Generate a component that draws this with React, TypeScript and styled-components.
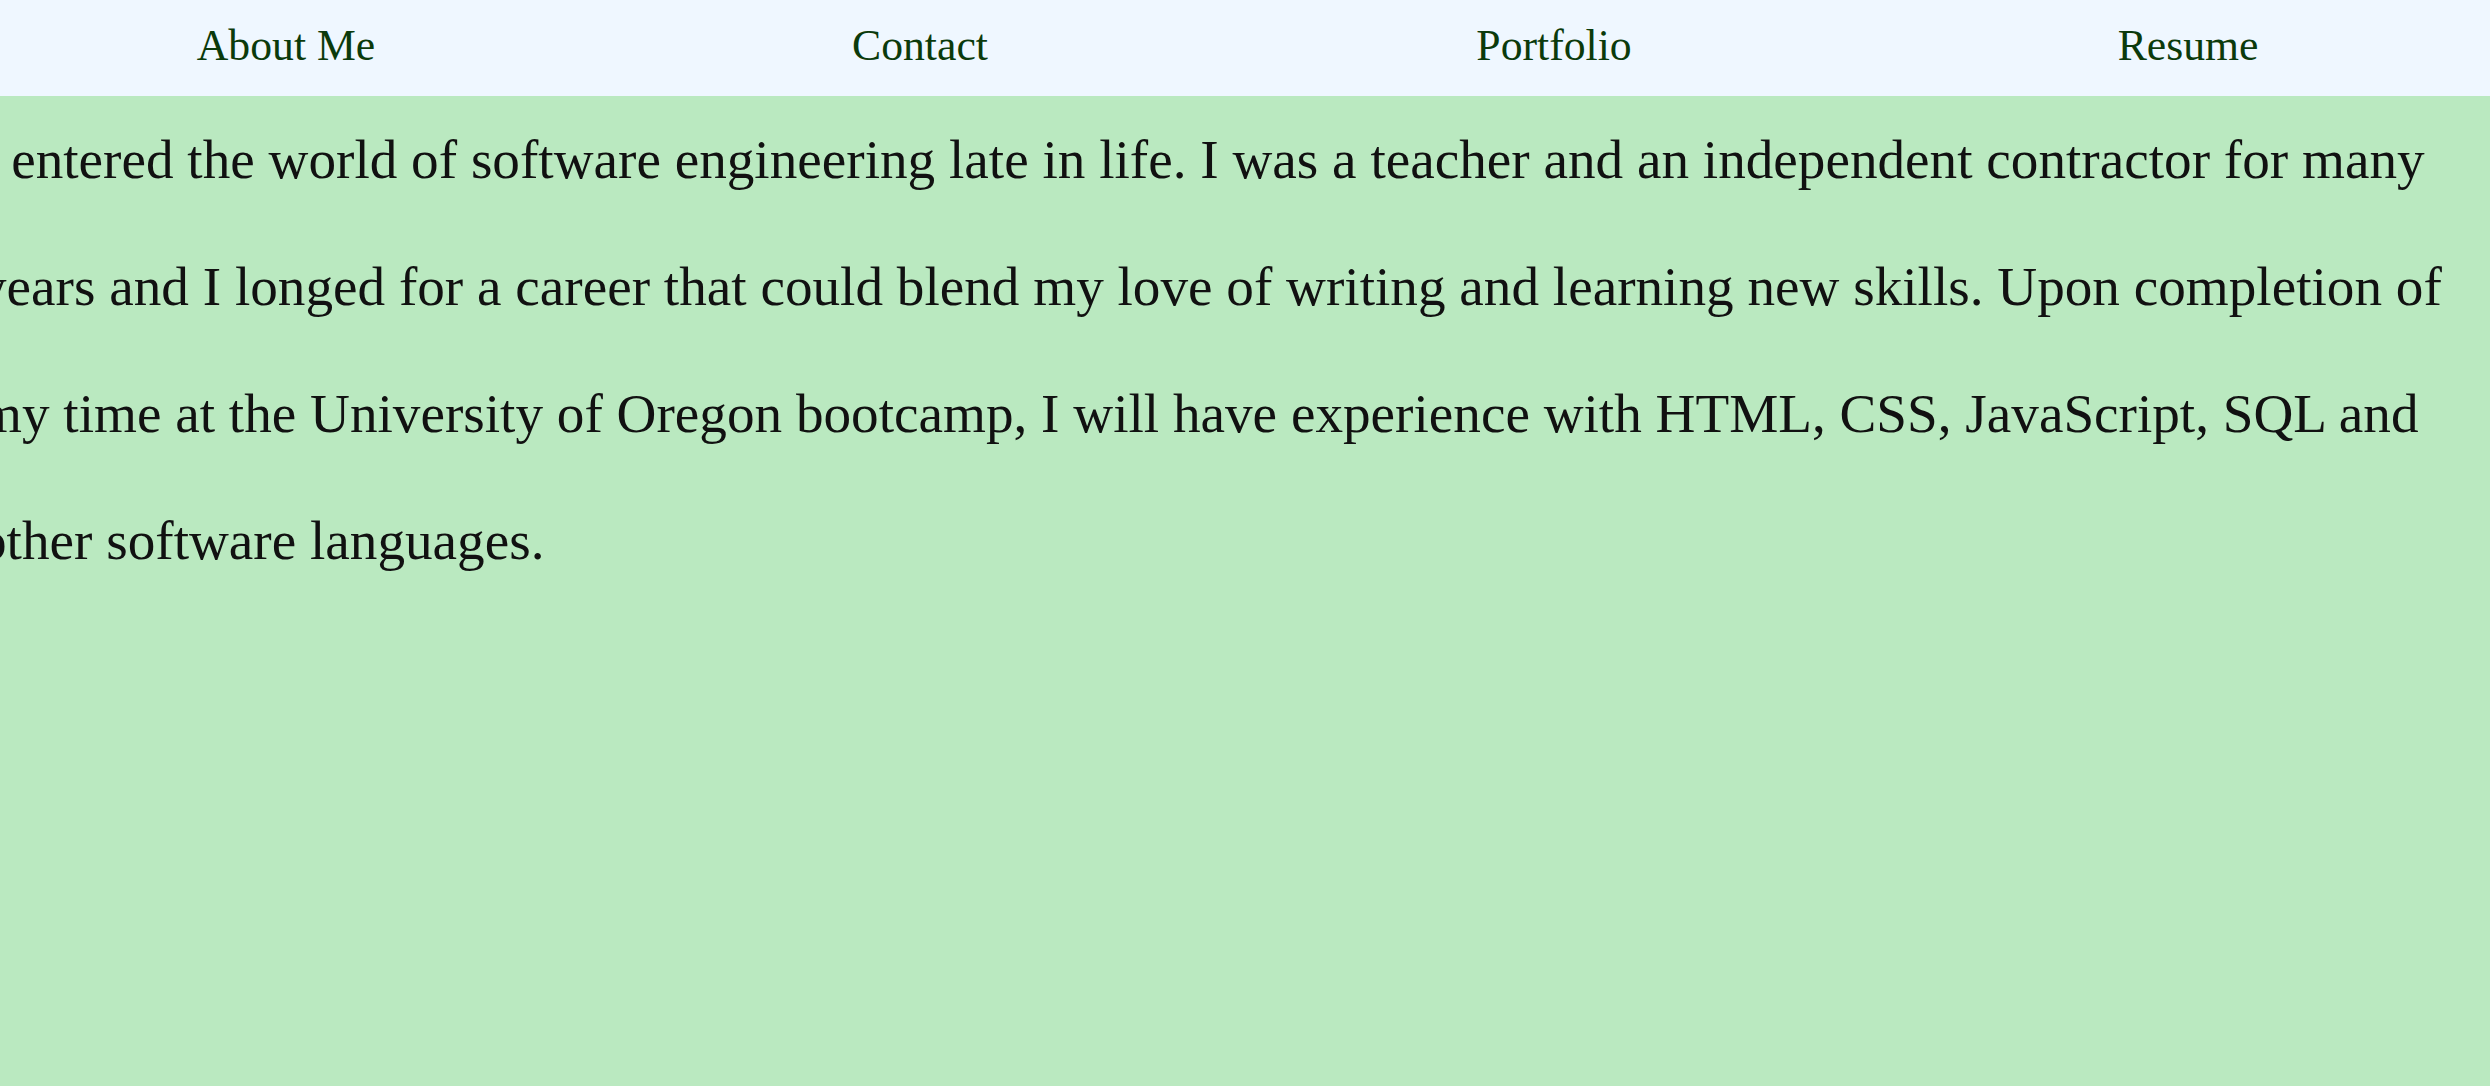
import React from "react";
import styled, { createGlobalStyle } from "styled-components";

const Global = createGlobalStyle`
  html, body {
    margin: 0;
    padding: 0;
    background: #bae9c0;
    overflow: hidden;
  }
  body {
    font-family: "Liberation Serif", "DejaVu Serif", serif;
  }
`;

const Page = styled.div`
  min-height: 1086px;
  background: #bae9c0;
  overflow: hidden;
`;

const Nav = styled.nav`
  display: grid;
  grid-template-columns: repeat(4, 634px);
  height: 96px;
  background: #eff7ff;
  margin-left: -31px;
  width: calc(100% + 62px);
`;

const NavLink = styled.a`
  display: flex;
  align-items: center;
  justify-content: center;
  color: #0b3a0b;
  font-size: 43.7px;
  text-decoration: none;
  padding-bottom: 6px;
`;

const Main = styled.main`
  margin-left: -21px;
  width: calc(100% + 21px);
`;

const Para = styled.p`
  margin: 0;
  font-size: 55.2px;
  line-height: 127px;
  color: #111;
  white-space: nowrap;
`;

export default function App() {
  return (
    <Page>
      <Global />
      <Nav>
        <NavLink href="#about">About Me</NavLink>
        <NavLink href="#contact">Contact</NavLink>
        <NavLink href="#portfolio">Portfolio</NavLink>
        <NavLink href="#resume">Resume</NavLink>
      </Nav>
      <Main>
        <Para>
          I entered the world of software engineering late in life. I was a teacher and an independent contractor for many
          <br />
          years and I longed for a career that could blend my love of writing and learning new skills. Upon completion of
          <br />
          my time at the University of Oregon bootcamp, I will have experience with HTML, CSS, JavaScript, SQL and
          <br />
          other software languages.
        </Para>
      </Main>
    </Page>
  );
}
